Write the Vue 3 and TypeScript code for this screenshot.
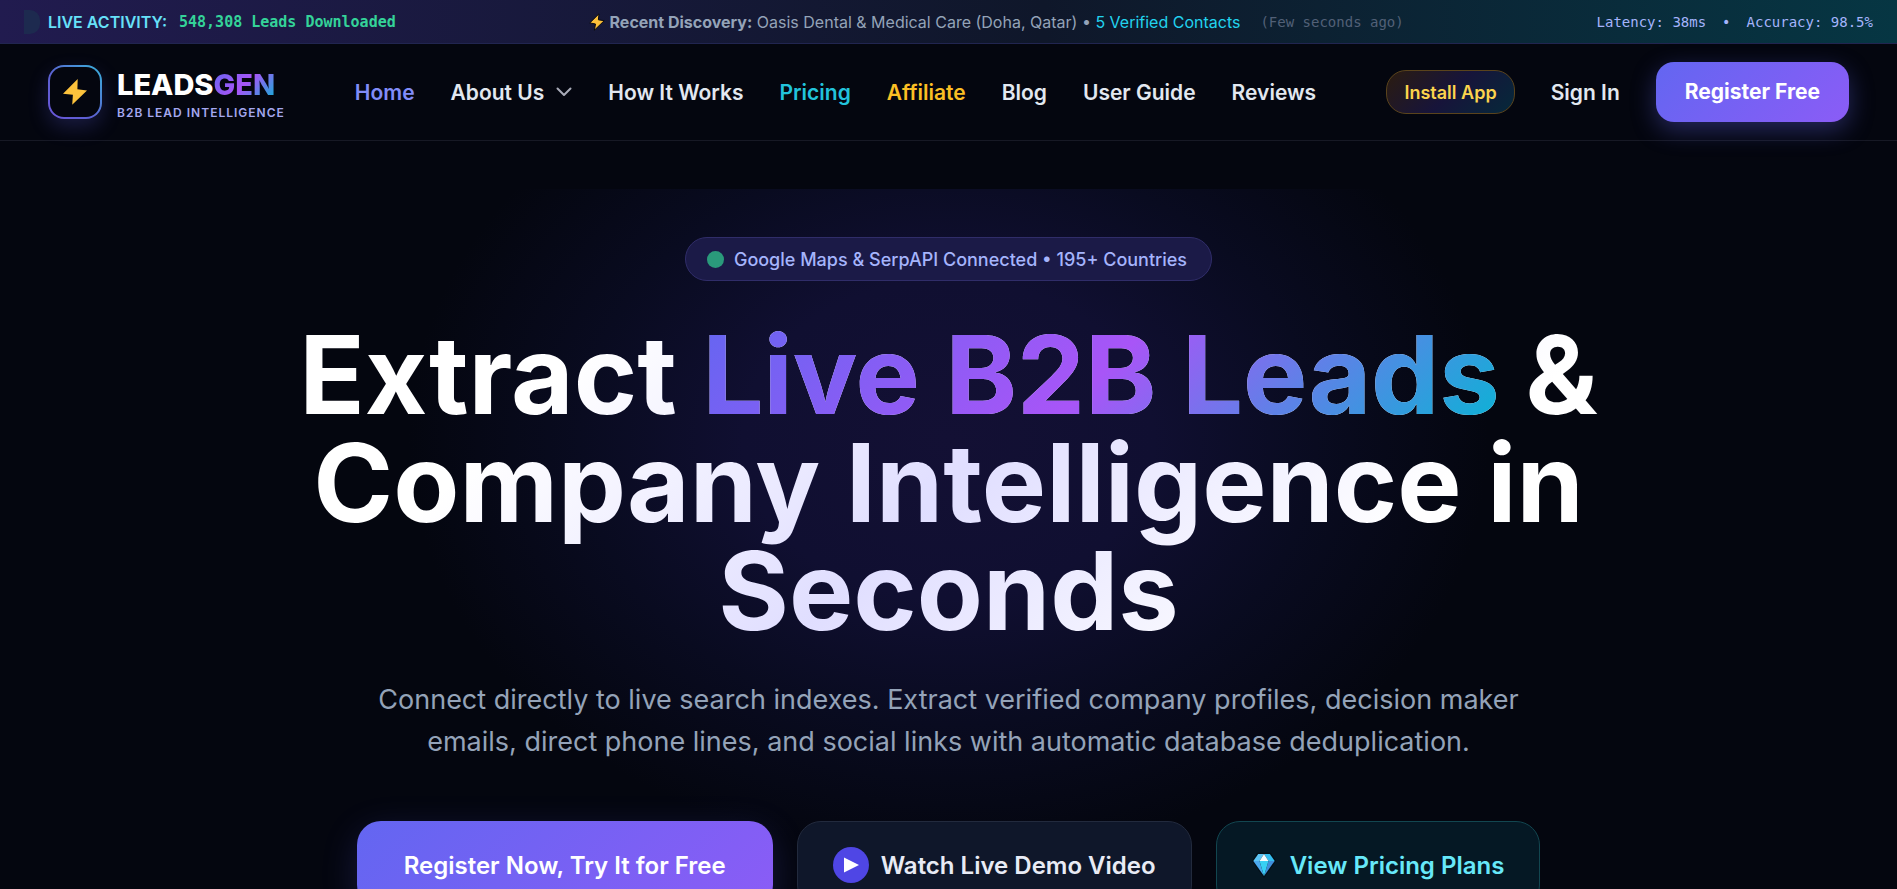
<script setup lang="ts">
interface NavItem {
  label: string
  tone?: 'active' | 'cyan' | 'amber'
  menu?: boolean
}

const navItems: NavItem[] = [
  { label: 'Home', tone: 'active' },
  { label: 'About Us', menu: true },
  { label: 'How It Works' },
  { label: 'Pricing', tone: 'cyan' },
  { label: 'Affiliate', tone: 'amber' },
  { label: 'Blog' },
  { label: 'User Guide' },
  { label: 'Reviews' },
]
</script>

<template>
  <div class="page">
    <div class="ticker">
      <div class="ticker-group">
        <span class="pulse"></span>
        <strong class="live">LIVE ACTIVITY:</strong>
        <span class="count mono">548,308 Leads Downloaded</span>
      </div>
      <div class="ticker-group discovery">
        <svg class="spark" viewBox="0 0 16 18" aria-hidden="true">
          <path d="M10 .8.8 9.900l5.700 1.100L5.400 17.200 15.200 7.700l-5.800-.9z" fill="#fbbf3a" stroke="#0a0a0e" stroke-width="1" stroke-linejoin="round" />
        </svg>
        <span><strong>Recent Discovery:</strong> Oasis Dental &amp; Medical Care (Doha, Qatar) • <span class="verified">5 Verified Contacts</span></span>
        <span class="ago mono">(Few seconds ago)</span>
      </div>
      <div class="ticker-group metrics mono">
        <span>Latency: 38ms</span>
        <span>•</span>
        <span>Accuracy: 98.5%</span>
      </div>
    </div>

    <header class="header">
      <a class="brand" href="#">
        <span class="brand-mark">
          <svg viewBox="0 0 24 26" aria-hidden="true">
            <path d="M14.700 0 0 14.700l9.900 1.100L9.200 25.700 24 11.500l-9.600-1.200z" fill="#fcc23c" />
          </svg>
        </span>
        <span class="brand-text">
          <span class="brand-name">LEADS<span class="brand-accent">GEN</span></span>
          <span class="brand-sub">B2B LEAD INTELLIGENCE</span>
        </span>
      </a>

      <nav class="nav" aria-label="Main">
        <a v-for="item in navItems" :key="item.label" href="#" :class="['nav-link', item.tone]">
          {{ item.label }}
          <svg v-if="item.menu" class="chevron" viewBox="0 0 16 10" aria-hidden="true">
            <path d="m1.500 1.500 6.500 6.500 6.500-6.500" fill="none" stroke="#a9abb8" stroke-width="2" stroke-linecap="round" stroke-linejoin="round" />
          </svg>
        </a>
      </nav>

      <div class="actions">
        <button class="install" type="button">Install App</button>
        <a class="sign-in" href="#">Sign In</a>
        <a class="register" href="#">Register Free</a>
      </div>
    </header>

    <main class="hero">
      <p class="badge"><span class="badge-dot"></span>Google Maps &amp; SerpAPI Connected • 195+ Countries</p>
      <h1 class="title">Extract <span class="title-accent">Live B2B Leads</span> &amp; Company Intelligence in Seconds</h1>
      <p class="lead">Connect directly to live search indexes. Extract verified company profiles, decision maker emails, direct phone lines, and social links with automatic database deduplication.</p>
      <div class="cta-row">
        <a class="cta primary" href="#">Register Now, Try It for Free</a>
        <button class="cta demo" type="button">
          <svg class="play" viewBox="0 0 36 36" aria-hidden="true">
            <circle cx="18" cy="18" r="18" fill="#4f46e5" />
            <path d="M11 10.500v15l15-7.500z" fill="#fff" />
          </svg>
          Watch Live Demo Video
        </button>
        <a class="cta pricing" href="#">
          <svg class="gem" viewBox="0 0 24 26" aria-hidden="true">
            <path d="M5.500 1h13L23.500 9 12 25.500.5 9z" fill="#041018" stroke="#041018" stroke-width="1" />
            <path d="M6.200 2H12L7.500 9H1.300z" fill="#5cc4f4" />
            <path d="M17.800 2H12L16.500 9h6.200z" fill="#35bdf0" />
            <path d="m12 2 4.500 7h-9z" fill="#f4fcff" />
            <path d="M1.300 9h6.200L12 24z" fill="#4aa8ee" />
            <path d="M22.700 9h-6.200L12 24z" fill="#3f8fdc" />
            <path d="M7.500 9h9L12 24z" fill="#38d0f4" />
          </svg>
          View Pricing Plans
        </a>
      </div>
    </main>
  </div>
</template>

<style>
html {
  background: #04060f;
  scrollbar-width: none;
}
body {
  margin: 0;
}
</style>

<style scoped>
.page {
  min-height: 100vh;
  background: #04060f;
  color: #e2e8f0;
  font-family: Inter, "Liberation Sans", sans-serif;
  overflow: hidden;
}
.page a {
  color: inherit;
  text-decoration: none;
}
.page button {
  font-family: inherit;
  cursor: pointer;
}
.mono {
  font-family: "DejaVu Sans Mono", "Liberation Mono", monospace;
}

.ticker {
  display: flex;
  align-items: center;
  justify-content: space-between;
  height: 43px;
  padding: 0 24px;
  border-bottom: 1px solid #212550;
  background: linear-gradient(90deg, #211b4f 0%, #0f172a 55%, #063643 100%);
  white-space: nowrap;
  font-size: 16px;
}
.ticker-group {
  display: flex;
  align-items: center;
}
.pulse {
  width: 16px;
  height: 24px;
  margin-right: 8px;
  border-radius: 0 10px 10px 0;
  background: #1d2a4f;
}
.live {
  margin-right: 12px;
  color: #67e1f9;
  font-weight: 600;
}
.count {
  color: #34d399;
  font-size: 15px;
  font-weight: 700;
}
.discovery {
  color: #94a3b8;
}
.spark {
  width: 16px;
  height: 18px;
  margin-right: 5px;
}
.verified {
  color: #22d3ee;
}
.ago {
  margin-left: 20px;
  color: #526077;
  font-size: 14px;
}
.metrics {
  gap: 16px;
  color: #a5b4fc;
  font-size: 14px;
}

.header {
  display: flex;
  align-items: center;
  height: 96px;
  padding: 0 48px;
  border-bottom: 1px solid #171925;
  white-space: nowrap;
}
.brand {
  display: flex;
  align-items: center;
  gap: 15px;
}
.brand-mark {
  display: grid;
  place-items: center;
  box-sizing: border-box;
  width: 54px;
  height: 54px;
  border: 2px solid transparent;
  border-radius: 16px;
  background:
    linear-gradient(#04060f, #04060f) padding-box,
    linear-gradient(45deg, #6a55d8, #5b62d2 45%, #38b4dc) border-box;
  box-shadow: 0 8px 20px rgba(99, 102, 241, 0.22);
}
.brand-mark svg {
  width: 24px;
  height: 26px;
}
.brand-text {
  display: flex;
  flex-direction: column;
  gap: 4px;
  padding-top: 5px;
}
.brand-name {
  color: #fff;
  font-size: 29px;
  font-weight: 800;
  line-height: 32px;
}
.brand-accent {
  background: linear-gradient(135deg, #6366f1, #a855f7 50%, #06b6d4);
  background-clip: text;
  color: transparent;
}
.brand-sub {
  color: #a5a8ef;
  font-size: 12px;
  font-weight: 600;
  letter-spacing: 1px;
  line-height: 16px;
}
.nav {
  display: flex;
  gap: 36px;
  margin-left: 70px;
  font-size: 21px;
  font-weight: 600;
}
.nav-link {
  display: flex;
  align-items: center;
  gap: 12px;
}
.page .active {
  color: #818cf8;
}
.page .cyan {
  color: #22c3dc;
}
.page .amber {
  color: #fbbf24;
}
.chevron {
  width: 16px;
  height: 10px;
}
.actions {
  display: flex;
  align-items: center;
  gap: 36px;
  margin-left: auto;
  font-size: 21px;
  font-weight: 600;
}
.install {
  height: 44px;
  padding: 0 17px;
  border: 1px solid #5a431c;
  border-radius: 20px;
  background: linear-gradient(135deg, #2b1c10, #17143a 50%, #05293a);
  color: #fcd34d;
  font-size: 18px;
  font-weight: 600;
}
.register {
  padding: 0 29px;
  border-radius: 18px;
  background: linear-gradient(135deg, #6366f1, #8b5cf6);
  box-shadow: 0 8px 24px rgba(99, 102, 241, 0.35);
  line-height: 60px;
}
.page .register {
  color: #fff;
  font-weight: 700;
}

.hero {
  display: flex;
  flex-direction: column;
  align-items: center;
  margin-top: 48px;
  padding: 48px 48px 60px;
  background: radial-gradient(540px 420px at 50% 250px, #131034 0%, #100f31 38%, #090b20 68%, #04060f 100%);
  text-align: center;
}
.badge {
  display: flex;
  align-items: center;
  gap: 10px;
  box-sizing: border-box;
  height: 44px;
  margin: 0;
  padding: 0 24px 0 21px;
  border: 1px solid #302d69;
  border-radius: 22px;
  background: #1b1a47;
  color: #a5b4fc;
  font-size: 18px;
  font-weight: 500;
}
.badge-dot {
  width: 17px;
  height: 17px;
  border-radius: 50%;
  background: #2a9a7b;
}
.title {
  max-width: 1340px;
  margin: 40px 0 0;
  background: linear-gradient(135deg, #fff 20%, #e0deff 50%, #fff 80%);
  background-clip: text;
  color: transparent;
  font-size: 108px;
  font-weight: 700;
  line-height: 108px;
}
.title-accent {
  background: linear-gradient(135deg, #6366f1, #a855f7 50%, #06b6d4);
  background-clip: text;
}
.lead {
  max-width: 1180px;
  margin: 34px 0 0;
  color: #94a3b8;
  font-size: 27px;
  line-height: 42px;
}
.cta-row {
  display: flex;
  gap: 24px;
  margin-top: 58px;
  white-space: nowrap;
}
.cta {
  display: flex;
  align-items: center;
  box-sizing: border-box;
  height: 88px;
  border: 1px solid transparent;
  border-radius: 24px;
  font-size: 24px;
  font-weight: 600;
}
.primary {
  padding: 0 46px;
  background: linear-gradient(135deg, #6366f1, #8b5cf6) border-box;
  box-shadow: 0 10px 36px rgba(99, 102, 241, 0.2);
}
.page .primary {
  color: #fff;
}
.demo {
  gap: 12px;
  padding: 0 35px;
  border-color: #222a3d;
  background: #0f172a;
  color: #e8ebf5;
}
.play {
  width: 36px;
  height: 36px;
}
.pricing {
  gap: 14px;
  padding: 0 35px;
  border-color: #124650;
  background: #051824;
}
.page .pricing {
  color: #67e8f9;
}
.gem {
  width: 24px;
  height: 26px;
}
</style>
